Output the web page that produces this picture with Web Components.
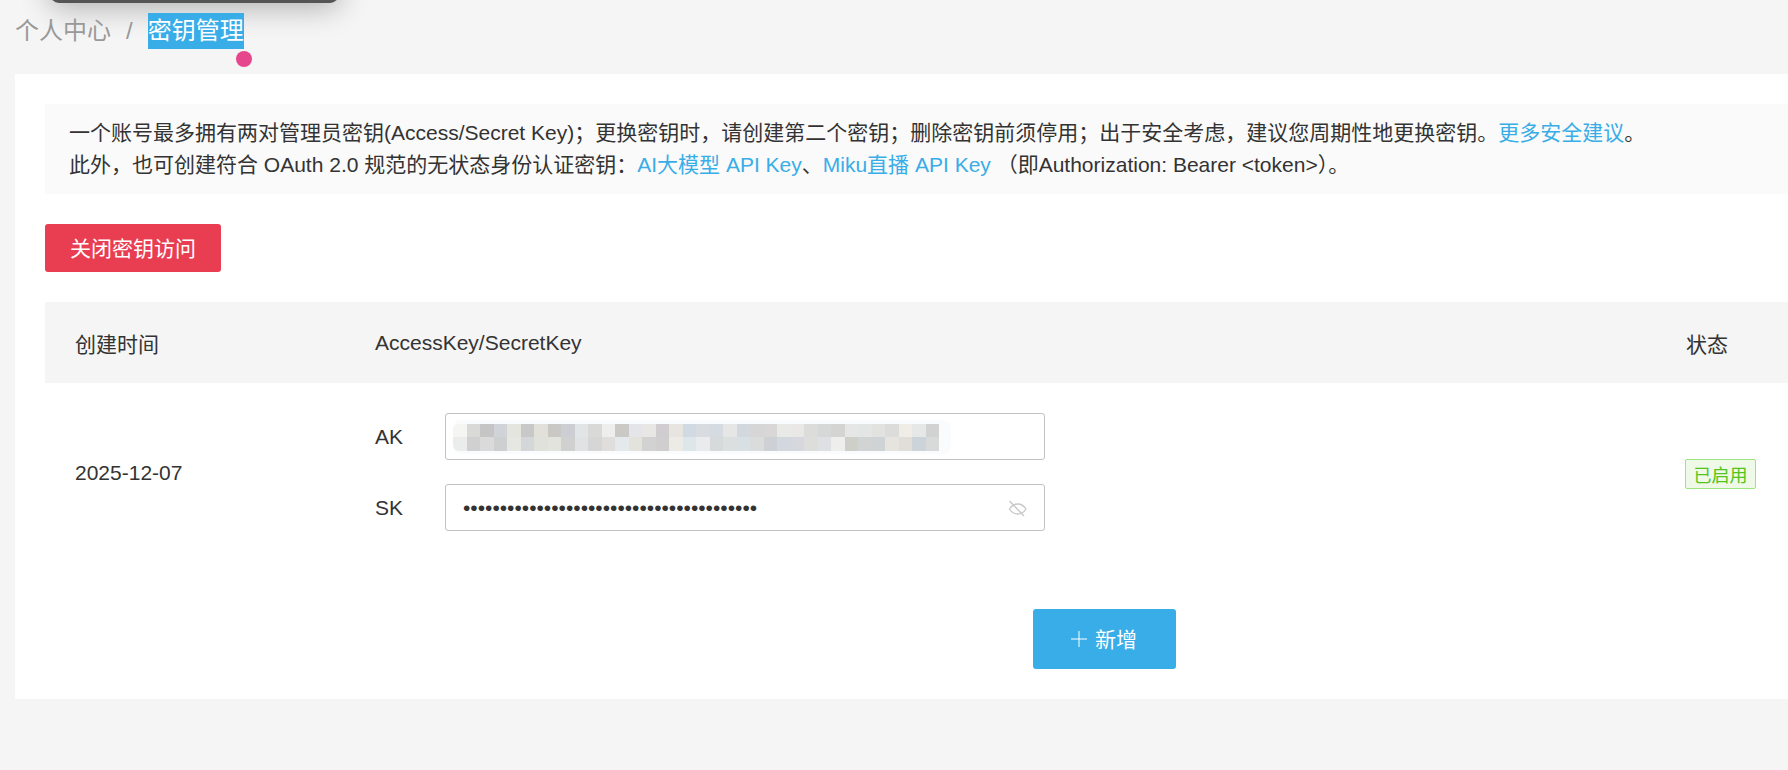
<!DOCTYPE html>
<html lang="zh">
<head>
<meta charset="utf-8">
<title>密钥管理</title>
<style>
  html, body { margin: 0; padding: 0; background: #f5f5f5; }
  body {
    width: 1788px;
    height: 770px;
    overflow: hidden;
    position: relative;
    font-family: "Liberation Sans", "Noto Sans CJK SC", sans-serif;
    color: #333;
  }
</style>
</head>
<body>
<key-page></key-page>

<script>
class KeyBreadcrumb extends HTMLElement {
  constructor() {
    super();
    this.attachShadow({ mode: "open" });
    this.shadowRoot.innerHTML = `
      <style>
        :host { display: flex; align-items: center; height: 36px; line-height: 36px; padding: 13px 0 25px 15px; font-size: 24px; color: #999; position: relative; }
        .sep { margin: 0 15px 0 15px; }
        .current { background: #38ade8; color: #fff; }
      </style>
      <span>个人中心</span><span class="sep">/</span><span class="current">密钥管理</span>
    `;
  }
}

class KeyNotice extends HTMLElement {
  constructor() {
    super();
    this.attachShadow({ mode: "open" });
    this.shadowRoot.innerHTML = `
      <style>
        :host { display: block; background: #fafafa; padding: 13px 24px; font-size: 21px; line-height: 32px; color: #333; white-space: nowrap; }
      </style>
      <slot></slot>
    `;
  }
}

class KeyButton extends HTMLElement {
  constructor() {
    super();
    this.attachShadow({ mode: "open" });
    this.shadowRoot.innerHTML = `
      <style>
        :host { display: inline-flex; align-items: center; justify-content: center; box-sizing: border-box; font-size: 21px; color: #fff; border-radius: 3px; background: #38ade8; height: 60px; width: 143px; gap: 8px; padding-bottom: 2px; }
        :host([danger]) { background: #e93d52; height: 48px; width: 176px; }
        ::slotted(svg) { display: block; margin-top: 2px; }
      </style>
      <slot></slot>
    `;
  }
}

// pixelated access key, sampled cell by cell
class KeyMosaic extends HTMLElement {
  constructor() {
    super();
    this.attachShadow({ mode: "open" });
    const rows = [
      "f5f5f3 d9d9d7 c5c5c5 d0d4d9 e5e5e0 c8c8c8 e1e1da c9c8c4 ccced3 e2e5e6 d9d9d8 eeeeec cac9c5 e4e5e8 e8e7e5 cfcdd0 e8e4e0 d1dae2 d8dbe0 d5dbe0 e6e6e6 d2d8de d5d6d5 d8d6d6 e9e9e7 e9e8e6 dcdddb d6d8d7 d4d5d2 e6e6e6 e4e5e5 e2e2e0 dcdcda f0ede7 e6e8e7 d2d2d2",
      "ebecec d0d0d0 dadada cdcfd1 e6e6e3 d5d6d8 e1e1dc e2e3dc d0d0d0 e0e2e3 d6d6d6 dfdedc e4e9ec e4e2dd d2d2d2 d1cecf ecebe6 dde7ea e9ebec d7dadb dcdfe0 d9e0e3 dadcdc cdd0d5 d3d7de d6d8dd dddedc dee1e3 eeeeec cfcfca d2d3d3 d0d3d5 e6e4df e1ded9 cdd4d9 d8d9d9"
    ];
    const cells = rows
      .flatMap((r) => r.split(" "))
      .map((c) => `<i style="background:#${c}"></i>`)
      .join("");
    this.shadowRoot.innerHTML = `
      <style>
        :host { display: block; box-sizing: border-box; width: 498px; height: 34px; padding: 4px 0 3px; border-radius: 8px; background: #fafbfc; }
        .grid { display: grid; width: max-content; grid-template-columns: repeat(36, 13.5px); grid-auto-rows: 13.5px; border-radius: 6px 0 0 6px; overflow: hidden; }
        i { display: block; }
      </style>
      <div class="grid">${cells}</div>
    `;
  }
}

class KeyField extends HTMLElement {
  constructor() {
    super();
    this.attachShadow({ mode: "open" });
    this.shadowRoot.innerHTML = `
      <style>
        :host { display: flex; align-items: center; font-size: 21px; color: #333; }
        .label { width: 70px; }
        .box { box-sizing: border-box; width: 600px; height: 47px; border: 1px solid #c2c2c2; border-radius: 3px; background: #fff; display: flex; align-items: center; padding: 0 16px 0 7px; justify-content: space-between; }
        ::slotted(.dots) { padding-left: 10px; }
      </style>
      <span class="label"><slot name="label"></slot></span>
      <div class="box"><slot></slot></div>
    `;
  }
}

class KeyTag extends HTMLElement {
  constructor() {
    super();
    this.attachShadow({ mode: "open" });
    this.shadowRoot.innerHTML = `
      <style>
        :host { display: inline-flex; align-items: center; justify-content: center; box-sizing: border-box; width: 71px; height: 30px; margin: 4px 0 0 -1px; background: #eef9e8; border: 1px solid #9de57f; border-radius: 2px; color: #52c41a; font-size: 18px; }
      </style>
      <slot></slot>
    `;
  }
}

class KeyTable extends HTMLElement {
  constructor() {
    super();
    this.attachShadow({ mode: "open" });
    this.shadowRoot.innerHTML = `
      <style>
        :host { display: block; font-size: 21px; color: #333; }
        .row { display: grid; grid-template-columns: 300px 1311px 1fr; padding-left: 30px; align-items: center; }
        .head { background: #f5f5f5; height: 81px; }
        .body { padding-top: 30px; padding-bottom: 78px; }
        .fields { display: flex; flex-direction: column; gap: 24px; }
        .date { padding-top: 1px; }
        .foot { display: flex; justify-content: center; width: 2118px; }
      </style>
      <div class="row head"><span>创建时间</span><span>AccessKey/SecretKey</span><span>状态</span></div>
      <div class="row body">
        <span class="date"><slot name="date"></slot></span>
        <div class="fields"><slot name="fields"></slot></div>
        <span><slot name="status"></slot></span>
      </div>
      <div class="foot"><slot name="action"></slot></div>
    `;
  }
}

class KeyPage extends HTMLElement {
  constructor() {
    super();
    this.attachShadow({ mode: "open" });
    this.shadowRoot.innerHTML = `
      <style>
        :host { display: block; position: relative; }
        .tip { position: absolute; left: 50px; top: -40px; width: 289px; height: 43px; background: #555; border-radius: 0 0 9px 9px; box-shadow: 0 4px 30px rgba(0,0,0,.3); }
        .dot { position: absolute; left: 236px; top: 51px; width: 16px; height: 16px; border-radius: 50%; background: #e6468c; }
        .card { background: #fff; margin-left: 15px; width: 1773px; height: 625px; box-sizing: border-box; padding: 30px 0 0 30px; overflow: hidden; }
        key-notice { margin-bottom: 30px; }
        .danger { margin-bottom: 30px; display: flex; }
        a { color: #38ade8; text-decoration: none; }
      </style>
      <div class="tip"></div>
      <key-breadcrumb></key-breadcrumb>
      <div class="dot"></div>
      <div class="card">
        <key-notice>
          一个账号最多拥有两对管理员密钥(Access/Secret Key)；更换密钥时，请创建第二个密钥；删除密钥前须停用；出于安全考虑，建议您周期性地更换密钥。<a>更多安全建议</a>。<br>
          此外，也可创建符合 OAuth 2.0 规范的无状态身份认证密钥：<a>AI大模型 API Key</a>、<a>Miku直播 API Key</a> （即Authorization: Bearer &lt;token&gt;）。
        </key-notice>
        <div class="danger"><key-button danger>关闭密钥访问</key-button></div>
        <key-table>
          <span slot="date">2025-12-07</span>
          <key-field slot="fields">
            <span slot="label">AK</span>
            <key-mosaic></key-mosaic>
          </key-field>
          <key-field slot="fields">
            <span slot="label">SK</span>
            <span class="dots">••••••••••••••••••••••••••••••••••••••••</span>
            <svg width="20" height="20" viewBox="0 0 20 20" fill="none" stroke="#c8c8c8" stroke-width="1.3"><path d="M1.500 11c2.200-3.400 4.900-5 8.200-5s6.200 1.600 8.300 5c-2.100 3.400-5 5-8.300 5s-6-1.600-8.200-5z"/><path d="M1.500 3l14.500 15"/></svg>
          </key-field>
          <key-tag slot="status">已启用</key-tag>
          <key-button slot="action"><svg width="16" height="16" viewBox="0 0 16 16" stroke="#fff" stroke-width="1"><path d="M8 0v16M0 8h16"/></svg>新增</key-button>
        </key-table>
      </div>
    `;
  }
}

customElements.define("key-breadcrumb", KeyBreadcrumb);
customElements.define("key-notice", KeyNotice);
customElements.define("key-button", KeyButton);
customElements.define("key-mosaic", KeyMosaic);
customElements.define("key-field", KeyField);
customElements.define("key-tag", KeyTag);
customElements.define("key-table", KeyTable);
customElements.define("key-page", KeyPage);
</script>
</body>
</html>
